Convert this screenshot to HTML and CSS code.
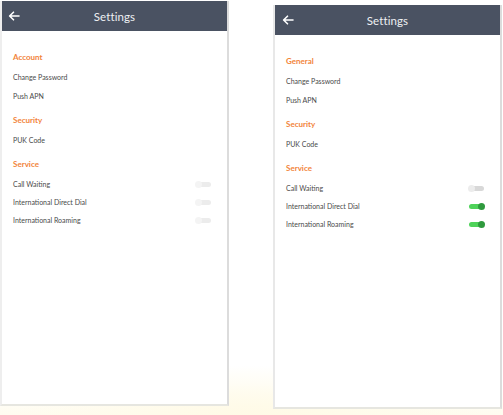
FILE: index.html
```html
<!DOCTYPE html>
<html>
<head>
<meta charset="utf-8">
<link rel="stylesheet" href="styles.css">
</head>
<body>
<div class="stage">
  <div class="phone phone-left">
    <div class="bar">
      <svg class="back" width="12" height="10" viewBox="0 0 12 10"><path d="M11 5H2M5.5 1.2L1.6 5l3.9 3.8" fill="none" stroke="#fff" stroke-width="1.6" stroke-linecap="round" stroke-linejoin="round"/></svg>
      <div class="title">Settings</div>
    </div>
    <div class="content">
      <div class="section first">
        <div class="head">Account</div>
        <div class="item">Change Password</div>
        <div class="item">Push APN</div>
      </div>
      <div class="section">
        <div class="head">Security</div>
        <div class="item">PUK Code</div>
      </div>
      <div class="section">
        <div class="head">Service</div>
        <div class="item row"><span>Call Waiting</span><span class="tog off faint"></span></div>
        <div class="item row"><span>International Direct Dial</span><span class="tog off faint"></span></div>
        <div class="item row"><span>International Roaming</span><span class="tog off faint"></span></div>
      </div>
    </div>
  </div>
  <div class="phone phone-right">
    <div class="bar">
      <svg class="back" width="12" height="10" viewBox="0 0 12 10"><path d="M11 5H2M5.5 1.2L1.6 5l3.9 3.8" fill="none" stroke="#fff" stroke-width="1.6" stroke-linecap="round" stroke-linejoin="round"/></svg>
      <div class="title">Settings</div>
    </div>
    <div class="content">
      <div class="section first">
        <div class="head">General</div>
        <div class="item">Change Password</div>
        <div class="item">Push APN</div>
      </div>
      <div class="section">
        <div class="head">Security</div>
        <div class="item">PUK Code</div>
      </div>
      <div class="section">
        <div class="head">Service</div>
        <div class="item row"><span>Call Waiting</span><span class="tog off"></span></div>
        <div class="item row"><span>International Direct Dial</span><span class="tog on"></span></div>
        <div class="item row"><span>International Roaming</span><span class="tog on"></span></div>
      </div>
    </div>
  </div>
</div>
</body>
</html>
```

FILE: styles.css
```css
html, body {
  margin: 0;
  padding: 0;
}
body {
  width: 503px;
  height: 415px;
  overflow: hidden;
  font-family: Lato, "Noto Sans", sans-serif;
  background:
    radial-gradient(ellipse 240px 60px at 250px 425px, #fffae4 0%, rgba(255,251,234,0.8) 50%, rgba(255,255,255,0) 100%),
    linear-gradient(#ffffff 0, #ffffff 385px, #fffcef 415px);
}
.stage {
  display: flex;
  gap: 44px;
  align-items: flex-start;
}
.phone {
  width: 229px;
  height: 405px;
  box-sizing: border-box;
  background: #fff;
  border: 1px solid #e6e6e6;
  border-top: none;
  border-right: 2px solid #dcdcdc;
  border-bottom: 2px solid #e6e6e0;
  display: flex;
  flex-direction: column;
}
.phone-left {
  margin-top: 1px;
  border-left: 2px solid #eeeeee;
}
.phone-right {
  margin-top: 5px;
  height: 404px;
  border-left: 2px solid #e8e8e8;
}
.bar {
  height: 30px;
  background: #4a5262;
  display: flex;
  align-items: center;
  justify-content: center;
  position: relative;
  flex: none;
}
.back {
  position: absolute;
  left: 6px;
  top: 10px;
}
.phone-right .back {
  left: 7px;
}
.title {
  color: #eef0f3;
  font-size: 11.5px;
  letter-spacing: 0.1px;
}
.content {
  padding: 16px 15px 0 11px;
}
.section {
  margin-top: 4px;
}
.section.first {
  margin-top: 0;
}
.head {
  height: 21px;
  line-height: 21px;
  color: #f2843a;
  font-size: 8px;
  font-weight: bold;
}
.item {
  height: 19px;
  line-height: 19px;
  font-size: 7px;
  color: #4a4a4a;
}
.item.row {
  height: 18px;
  line-height: 18px;
  display: flex;
  justify-content: space-between;
  align-items: center;
}
.tog {
  width: 15px;
  height: 5px;
  border-radius: 3px;
  position: relative;
  margin-right: 1px;
}
.tog::after {
  content: "";
  position: absolute;
  top: -1px;
  width: 7px;
  height: 7px;
  border-radius: 50%;
}
.tog.off {
  background: #d8d8d8;
}
.tog.off::after {
  left: -1px;
  background: #ececec;
}
.tog.off.faint {
  background: #ececec;
}
.tog.off.faint::after {
  background: #f4f4f4;
}
.tog.on {
  background: #4fd35a;
}
.tog.on::after {
  right: -1px;
  background: #2f9a3e;
}
```
